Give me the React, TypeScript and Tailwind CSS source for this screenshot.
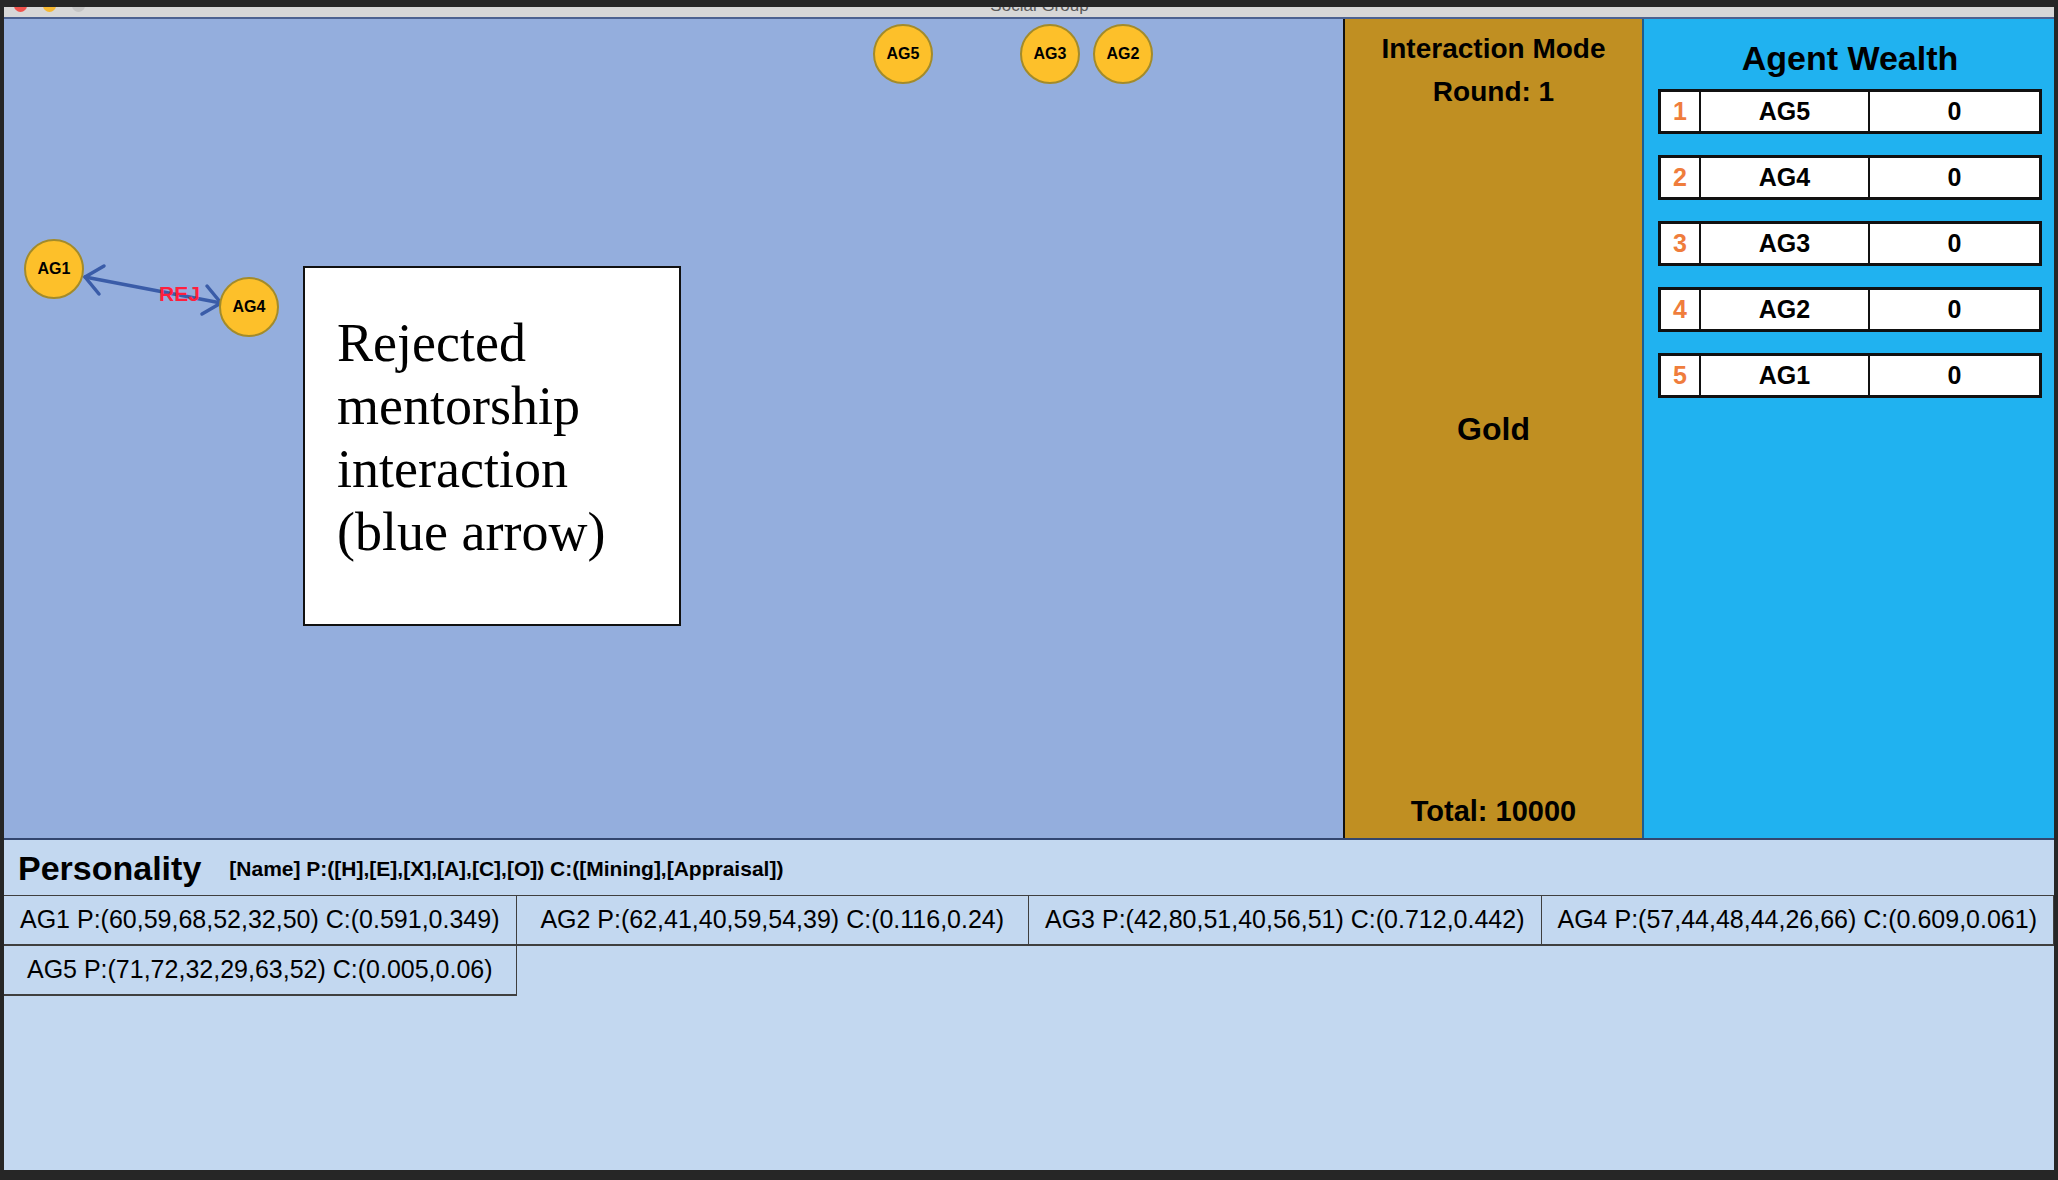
import React from 'react';

const nodes = [
  { id: 'AG5', x: 869, y: 5 },
  { id: 'AG3', x: 1016, y: 5 },
  { id: 'AG2', x: 1089, y: 5 },
  { id: 'AG1', x: 20, y: 220 },
  { id: 'AG4', x: 215, y: 258 },
];

const wealth = [
  { rank: 1, name: 'AG5', value: 0 },
  { rank: 2, name: 'AG4', value: 0 },
  { rank: 3, name: 'AG3', value: 0 },
  { rank: 4, name: 'AG2', value: 0 },
  { rank: 5, name: 'AG1', value: 0 },
];

const personalities = [
  'AG1 P:(60,59,68,52,32,50) C:(0.591,0.349)',
  'AG2 P:(62,41,40,59,54,39) C:(0.116,0.24)',
  'AG3 P:(42,80,51,40,56,51) C:(0.712,0.442)',
  'AG4 P:(57,44,48,44,26,66) C:(0.609,0.061)',
  'AG5 P:(71,72,32,29,63,52) C:(0.005,0.06)',
];

function Node({ id, x, y }: { id: string; x: number; y: number }) {
  return (
    <div
      className="absolute w-[60px] h-[60px] rounded-full bg-[#fdc02a] border-2 border-[#a38b2a] flex items-center justify-center text-[16px] font-bold text-black"
      style={{ left: x, top: y }}
    >
      {id}
    </div>
  );
}

export default function App() {
  return (
    <div className="w-[2058px] h-[1180px] bg-[#262626] flex flex-col pt-[7px] pb-[10px] pl-[4px] pr-[4px] font-['Liberation_Sans',Arial,sans-serif] overflow-hidden">
      {/* title bar */}
      <div className="h-[10px] bg-[#d7d7d7] overflow-hidden flex items-start relative">
        <div className="flex gap-[16px] pl-[10px] -mt-[8px]">
          <span className="w-[13px] h-[13px] rounded-full bg-[#f0524c]" />
          <span className="w-[13px] h-[13px] rounded-full bg-[#f5b730]" />
          <span className="w-[13px] h-[13px] rounded-full bg-[#c4c4c4]" />
        </div>
        <div className="flex-1 flex justify-center -mt-[11px] pr-[60px]">
          <span className="text-[17px] leading-[20px] text-[#5a5a5a]">Social Group</span>
        </div>
      </div>
      <div className="h-[2px] bg-[#4d6291]" />

      {/* main area */}
      <div className="h-[819px] flex">
        {/* canvas */}
        <div className="w-[1339px] shrink-0 bg-[#94aedd] relative overflow-hidden">
          <svg className="absolute left-0 top-0 pointer-events-none" width="1339" height="819">
            <g stroke="#3a5ca8" strokeWidth="3.5" fill="none" strokeLinecap="round" strokeLinejoin="round">
              <line x1="81" y1="258" x2="217" y2="284" />
              <polyline points="100,247 81,258 95,275" />
              <polyline points="203,267 217,284 198,295" />
            </g>
          </svg>
          <span className="absolute left-[155px] top-[263px] text-[21px] leading-[24px] font-bold text-[#ff1f3d]">
            REJ
          </span>
          {nodes.map(n => (
            <Node key={n.id} {...n} />
          ))}
          <div className="absolute left-[299px] top-[247px] w-[378px] h-[360px] bg-white border-2 border-[#111] pt-[44px] pl-[32px]">
            <p className="font-['Liberation_Serif','Times_New_Roman',serif] text-[54px] leading-[63px] text-black">
              Rejected
              <br />
              mentorship
              <br />
              interaction
              <br />
              (blue arrow)
            </p>
          </div>
        </div>

        {/* interaction mode panel */}
        <div className="w-[299px] shrink-0 bg-[#c08f22] border-l-2 border-[#111] flex flex-col items-center pt-[12px] font-bold text-black">
          <div className="text-[28px] leading-[36px]">Interaction Mode</div>
          <div className="text-[28px] leading-[36px] mt-[7px]">Round: 1</div>
          <div className="text-[32px] leading-[40px] mt-[299px]">Gold</div>
          <div className="text-[29px] leading-[36px] mt-[344px]">Total: 10000</div>
        </div>

        {/* wealth panel */}
        <div className="flex-1 min-w-0 bg-[#20b2f0] border-l-2 border-[#1d5d8f] flex flex-col pl-[14px] pr-[12px] pt-[19px]">
          <div className="text-[34px] leading-[40px] font-bold text-black text-center">Agent Wealth</div>
          <div className="flex flex-col gap-[21px] mt-[11px]">
            {wealth.map(w => (
              <div key={w.rank} className="h-[45px] flex bg-white border-[3px] border-[#111] font-bold text-[25px]">
                <div className="w-[40px] flex items-center justify-center text-[#ef7d3c] border-r-2 border-[#111]">
                  {w.rank}
                </div>
                <div className="w-[169px] flex items-center justify-center text-black border-r-2 border-[#111]">
                  {w.name}
                </div>
                <div className="flex-1 flex items-center justify-center text-black">{w.value}</div>
              </div>
            ))}
          </div>
        </div>
      </div>
      <div className="h-[2px] bg-[#33466e]" />

      {/* personality panel */}
      <div className="h-[330px] bg-[#c3d8f0] flex flex-col">
        <div className="h-[55px] flex items-center pl-[14px] pt-[2px]">
          <span className="text-[34px] font-bold text-black">Personality</span>
          <span className="ml-[28px] text-[21px] font-bold text-black">
            [Name] P:([H],[E],[X],[A],[C],[O]) C:([Mining],[Appraisal])
          </span>
        </div>
        <div className="grid grid-cols-4 border-t border-[#3f3f3f]">
          {personalities.map(p => (
            <div
              key={p}
              className="h-[50px] flex items-center justify-center border-r border-b-2 border-[#3f3f3f] text-[25px] text-black whitespace-nowrap"
            >
              {p}
            </div>
          ))}
        </div>
      </div>
    </div>
  );
}
